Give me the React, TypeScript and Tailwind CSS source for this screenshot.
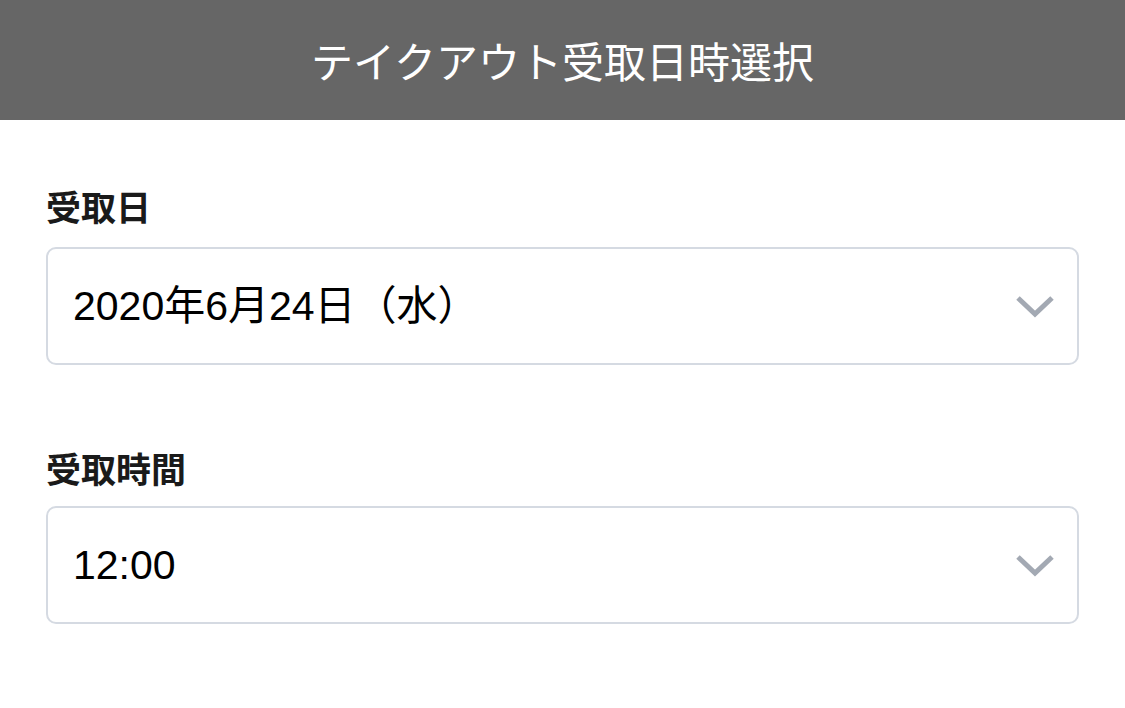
import React from "react";

const Chevron = () => (
  <svg width="40" height="24" viewBox="0 0 40 24" className="shrink-0">
    <polyline points="3,4 20,20 37,4" fill="none" stroke="#a3a9b3" strokeWidth="5" />
  </svg>
);

const Select = ({ value }: { value: string }) => (
  <div className="h-[118px] rounded-[10px] border-2 border-[#d5dae2] flex items-center justify-between pl-[25px] pr-[22px]">
    <span className="text-[41px] text-black leading-none">{value}</span>
    <Chevron />
  </div>
);

const Label = ({ children, className }: { children: React.ReactNode; className: string }) => (
  <div
    className={
      "text-[35px] font-bold leading-[34px] text-[#1a1a1a] font-['Noto_Sans_CJK_JP',sans-serif] " + className
    }
  >
    {children}
  </div>
);

export default function App() {
  return (
    <div className="w-[1125px] h-[708px] bg-white font-['Liberation_Sans','Noto_Sans_CJK_JP',sans-serif]">
      <div className="h-[120px] bg-[#666666] flex items-center justify-center">
        <h1 className="text-white text-[42px] font-normal leading-none font-['Noto_Sans_CJK_JP',sans-serif]">
          テイクアウト受取日時選択
        </h1>
      </div>
      <div className="px-[46px] pt-[69px]">
        <Label className="mb-[24px]">受取日</Label>
        <Select value="2020年6月24日（水）" />
        <Label className="mt-[86px] mb-[21px]">受取時間</Label>
        <Select value="12:00" />
      </div>
    </div>
  );
}
